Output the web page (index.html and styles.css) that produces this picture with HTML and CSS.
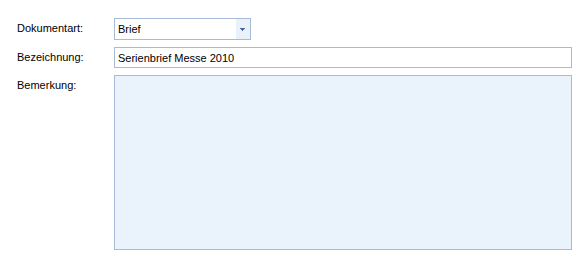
FILE: index.html
```html
<!DOCTYPE html>
<html lang="de">
<head>
    <meta charset="UTF-8">
    <title>Dokument</title>
    <link rel="stylesheet" href="styles.css">
</head>
<body>
    <div class="form">
        <div class="form-row">
            <label>Dokumentart:</label>
            <div class="combo">
                <span class="combo-text">Brief</span>
                <span class="combo-button">
                    <svg width="5" height="3" viewBox="0 0 5 3" shape-rendering="crispEdges">
                        <rect x="0" y="0" width="5" height="1" fill="#4a6ca6"/>
                        <rect x="1" y="1" width="3" height="1" fill="#4a6ca6"/>
                        <rect x="2" y="2" width="1" height="1" fill="#4a6ca6"/>
                    </svg>
                </span>
            </div>
        </div>
        <div class="form-row">
            <label for="bezeichnung">Bezeichnung:</label>
            <input type="text" id="bezeichnung" class="field" value="Serienbrief Messe 2010">
        </div>
        <div class="form-row">
            <label for="bemerkung">Bemerkung:</label>
            <textarea id="bemerkung" class="memo"></textarea>
        </div>
    </div>
</body>
</html>
```

FILE: styles.css
```css
body {
    margin: 0;
    background: #fff;
    font-family: "Liberation Sans", Arial, sans-serif;
    font-size: 11px;
    color: #000;
}
.form {
    padding: 18px 0 0 17px;
    display: flex;
    flex-direction: column;
    gap: 7px;
}
.form-row {
    display: grid;
    grid-template-columns: 97px 458px;
    align-items: start;
}
.form-row label {
    line-height: 13px;
    padding-top: 4px;
}
.combo {
    width: 137px;
    height: 22px;
    box-sizing: border-box;
    border: 1px solid #a7bbd8;
    display: flex;
    align-items: center;
}
.combo-text {
    flex: 1;
    padding-left: 3px;
}
.combo-button {
    width: 14px;
    height: 100%;
    padding-right: 1px;
    box-sizing: border-box;
    background: #e9f1fb;
    display: flex;
    align-items: center;
    justify-content: center;
}
.combo-button svg {
    display: block;
}
.field {
    width: 458px;
    height: 21px;
    box-sizing: border-box;
    border: 1px solid #a7bbd8;
    margin: 0;
    padding: 0 3px;
    font: inherit;
    color: #000;
    outline: none;
}
.memo {
    display: block;
    width: 458px;
    height: 175px;
    box-sizing: border-box;
    border: 1px solid #a7bbd8;
    background: #eaf2fc;
    margin: 0;
    padding: 2px 3px;
    font: inherit;
    resize: none;
    outline: none;
}
```
